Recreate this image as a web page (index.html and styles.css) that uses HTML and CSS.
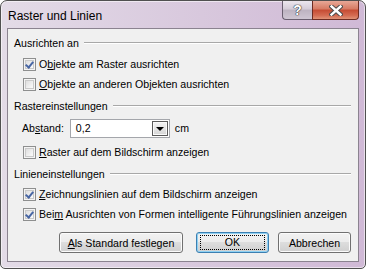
FILE: index.html
```html
<!DOCTYPE html>
<html lang="de">
<head>
  <meta charset="UTF-8" />
  <title>Raster und Linien</title>
  <link rel="stylesheet" href="styles.css">
</head>
<body>
  <div class="window">
    <div class="titlebar">
      <span class="title">Raster und Linien</span>
      <div class="caption-buttons">
        <span class="cap-btn help">?</span>
        <span class="cap-btn close">
          <svg width="14" height="11" viewBox="0 0 14 11">
            <path d="M2.5 1.5 L11.5 9.5 M11.5 1.5 L2.5 9.5" stroke="#4a4a4a" stroke-width="4.4" stroke-linecap="square"/>
            <path d="M2.5 1.5 L11.5 9.5 M11.5 1.5 L2.5 9.5" stroke="#fff" stroke-width="2.4" stroke-linecap="square"/>
          </svg>
        </span>
      </div>
    </div>

    <div class="client">
      <div class="group-head first">Ausrichten an</div>
      <div class="check-row first">
        <span class="box checked"></span>
        <span>O<u>b</u>jekte am Raster ausrichten</span>
      </div>
      <div class="check-row">
        <span class="box"></span>
        <span><u>O</u>bjekte an anderen Objekten ausrichten</span>
      </div>

      <div class="group-head">Rastereinstellungen</div>
      <div class="field-row">
        <span>Ab<u>s</u>tand:</span>
        <div class="combo">
          <span class="combo-value">0,2</span>
          <span class="combo-btn"><span class="arrow"></span></span>
        </div>
        <span>cm</span>
      </div>
      <div class="check-row spaced">
        <span class="box"></span>
        <span><u>R</u>aster auf dem Bildschirm anzeigen</span>
      </div>

      <div class="group-head">Linieneinstellungen</div>
      <div class="check-row tight">
        <span class="box checked"></span>
        <span><u>Z</u>eichnungslinien auf dem Bildschirm anzeigen</span>
      </div>
      <div class="check-row">
        <span class="box checked"></span>
        <span>Bei<u>m</u> Ausrichten von Formen intelligente Führungslinien anzeigen</span>
      </div>

      <div class="buttons">
        <button class="btn wide"><u>A</u>ls Standard festlegen</button>
        <button class="btn default"><span class="focus">OK</span></button>
        <button class="btn">Abbrechen</button>
      </div>
    </div>
  </div>
</body>
</html>
```

FILE: styles.css
```css
body {
  margin: 0;
  background: #ffffff;
  font-family: "Liberation Sans", Arial, sans-serif;
  font-size: 10.6px;
  color: #000;
}
.window {
  box-sizing: border-box;
  width: 366px;
  height: 269px;
  border: 1px solid #505050;
  border-radius: 7px 7px 5px 5px;
  background: linear-gradient(to right, #e3dbe7, #d8c8dd 55%, #d0b9d6);
  box-shadow: inset 0 0 0 1px rgba(255,255,255,0.55);
  padding: 0 6px 6px 6px;
}
.titlebar {
  height: 27px;
  display: flex;
  justify-content: space-between;
  align-items: flex-start;
}
.title {
  font-size: 12px;
  margin-top: 8px;
  margin-left: 1px;
}
.caption-buttons {
  display: flex;
}
.cap-btn {
  box-sizing: border-box;
  height: 19px;
  display: flex;
  align-items: center;
  justify-content: center;
  border: 1px solid #6a5f70;
  border-top: none;
}
.help {
  width: 30px;
  border-right: none;
  border-radius: 0 0 0 4px;
  background: linear-gradient(#ece6ee, #d5ccd8 45%, #bdb3c1 50%, #cfc6d3);
  font-size: 14px;
  font-weight: bold;
  color: #fff;
  text-shadow: 0 0 1px #333, 0 0 1px #333, 0 0 1px #333;
}
.close {
  width: 47px;
  border-radius: 0 0 4px 0;
  border-color: #6e2c22;
  background: linear-gradient(#e8a897, #d67a63 45%, #c54b33 50%, #d46b52 80%, #e09378);
}
.client {
  box-sizing: border-box;
  height: 234px;
  border: 1px solid #8b8390;
  background: #f0f0f0;
  padding: 6px 7px 0 6px;
}
.group-head {
  height: 16px;
  display: flex;
  align-items: center;
  gap: 5px;
  margin-top: 4px;
}
.group-head.first {
  margin-top: 0;
}
.group-head::after {
  content: "";
  flex: 1;
  height: 0;
  border-top: 1px solid #a8a8a8;
  border-bottom: 1px solid #ffffff;
}
.check-row {
  height: 20px;
  display: flex;
  align-items: center;
  gap: 3px;
  padding-left: 9px;
}
.check-row.first {
  margin-top: 3px;
}
.check-row.spaced {
  margin-top: 4px;
}
.check-row.tight {
  margin-top: 2px;
}
.box {
  box-sizing: border-box;
  width: 13px;
  height: 13px;
  border: 1px solid #8e8f8f;
  background: linear-gradient(135deg, #d6d6d6, #f6f6f6 70%, #ffffff);
  box-shadow: inset 0 0 0 1px #f4f4f4, inset 0 0 0 2px #c9c9c9;
  flex: none;
}
.box.checked {
  position: relative;
}
.box.checked::after {
  content: "";
  position: absolute;
  left: 3px;
  top: 1px;
  width: 3px;
  height: 6px;
  border: solid #4866a4;
  border-width: 0 2px 2px 0;
  transform: rotate(40deg);
}
.field-row {
  height: 20px;
  display: flex;
  align-items: center;
  margin-top: 4px;
  padding-left: 8px;
}
.combo {
  box-sizing: border-box;
  width: 100px;
  height: 19px;
  margin: 0 5px 0 6px;
  border: 1px solid #a4a6ab;
  background: #fff;
  display: flex;
  align-items: center;
  justify-content: space-between;
  padding: 0 1px 0 5px;
}
.combo-btn {
  box-sizing: border-box;
  width: 16px;
  height: 15px;
  border: 1px solid #5a5a5a;
  background: linear-gradient(#f4f4f4, #e4e4e4 50%, #d6d6d6);
  box-shadow: inset 0 0 0 1px #fafafa;
  display: flex;
  align-items: center;
  justify-content: center;
}
.arrow {
  width: 0;
  height: 0;
  border-left: 4px solid transparent;
  border-right: 4px solid transparent;
  border-top: 4px solid #000;
  margin-top: 2px;
}
.buttons {
  display: flex;
  justify-content: flex-end;
  gap: 9px;
  margin-top: 8px;
}
.btn {
  box-sizing: border-box;
  width: 73px;
  height: 21px;
  padding: 0;
  font: inherit;
  color: #000;
  border: 1px solid #707070;
  border-radius: 3px;
  background: linear-gradient(#f2f2f2, #ebebeb 50%, #dddddd 50%, #cfcfcf);
  box-shadow: inset 0 0 0 1px #fbfbfb;
}
.btn.wide {
  width: 124px;
  margin-right: 4px;
}
.btn.default {
  border-color: #3c7fb1;
  box-shadow: inset 0 0 0 1px #8fd1f3;
  display: flex;
  align-items: center;
  justify-content: center;
}
.focus {
  box-sizing: border-box;
  width: 65px;
  height: 15px;
  line-height: 13px;
  border: 1px dotted #000;
}
```
